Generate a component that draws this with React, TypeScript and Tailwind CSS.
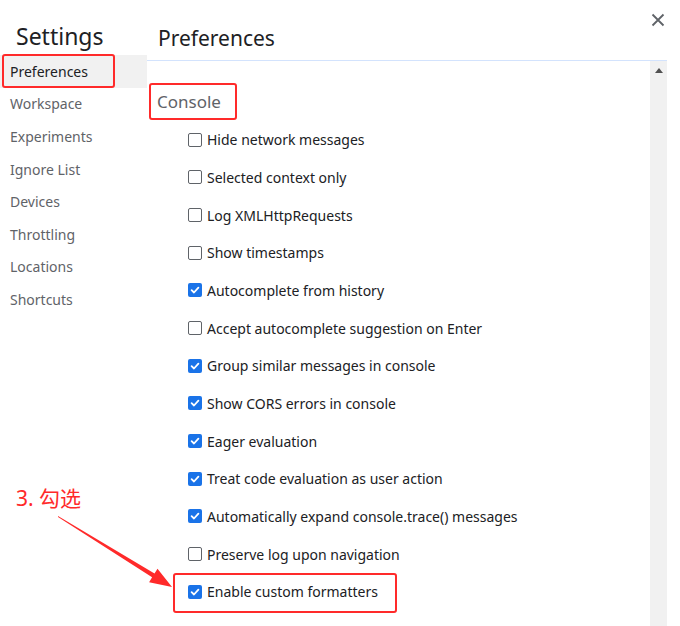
import React from "react";

const navItems = [
  "Preferences",
  "Workspace",
  "Experiments",
  "Ignore List",
  "Devices",
  "Throttling",
  "Locations",
  "Shortcuts",
];

const consoleOptions: { label: string; checked: boolean }[] = [
  { label: "Hide network messages", checked: false },
  { label: "Selected context only", checked: false },
  { label: "Log XMLHttpRequests", checked: false },
  { label: "Show timestamps", checked: false },
  { label: "Autocomplete from history", checked: true },
  { label: "Accept autocomplete suggestion on Enter", checked: false },
  { label: "Group similar messages in console", checked: true },
  { label: "Show CORS errors in console", checked: true },
  { label: "Eager evaluation", checked: true },
  { label: "Treat code evaluation as user action", checked: true },
  { label: "Automatically expand console.trace() messages", checked: true },
  { label: "Preserve log upon navigation", checked: false },
  { label: "Enable custom formatters", checked: true },
];

const Checkbox = ({ checked }: { checked: boolean }) =>
  checked ? (
    <span className="flex h-[14px] w-[14px] items-center justify-center rounded-[2px] bg-[#1a73e8]">
      <svg width="10" height="10" viewBox="0 0 10 10" fill="none">
        <path d="M1.6 5.2 L4 7.5 L8.4 2.6" stroke="white" strokeWidth="1.8" strokeLinecap="round" strokeLinejoin="round" />
      </svg>
    </span>
  ) : (
    <span className="h-[14px] w-[14px] rounded-[2px] border border-[#5f6368] bg-white" />
  );

export default function App() {
  return (
    <div
      className="relative flex h-[626px] w-[680px] overflow-hidden bg-white"
      style={{ fontFamily: '"Noto Sans", "Noto Sans CJK SC", sans-serif' }}
    >
      {/* sidebar */}
      <div className="w-[147px] shrink-0">
        <div className="h-[55px] pl-[16px] pt-[21px] text-[23px] leading-[30px] text-[#202124]">Settings</div>
        {navItems.map((item, i) => (
          <div
            key={item}
            className={
              "flex h-[32.6px] items-center pl-[10px] text-[14px] " +
              (i === 0 ? "bg-[#f1f1f1] text-[#202124]" : "text-[#5f6368]")
            }
          >
            {item}
          </div>
        ))}
      </div>

      {/* main */}
      <div className="flex flex-1 flex-col">
        <div className="mr-[13px] flex h-[61px] items-start justify-between border-b border-[#d3e3fd] pl-[11px]">
          <div className="pt-[23px] text-[21px] leading-[30px] text-[#202124]">Preferences</div>
          <button className="mr-[-1px] mt-[10px] flex h-[20px] w-[20px] items-center justify-center">
            <svg width="14" height="14" viewBox="0 0 14 14">
              <path d="M1.5 1.5 L12.5 12.5 M12.5 1.5 L1.5 12.5" stroke="#5f6368" strokeWidth="1.8" />
            </svg>
          </button>
        </div>
        <div className="flex flex-1">
          <div className="flex-1 pl-[10px]">
            <div className="flex h-[60px] items-center pt-[22px] text-[17px] text-[#5f6368]">Console</div>
            {consoleOptions.map((o) => (
              <div key={o.label} className="flex h-[37.67px] items-center gap-[5px] pl-[31px] text-[14px] text-[#202124]">
                <Checkbox checked={o.checked} />
                <span>{o.label}</span>
              </div>
            ))}
          </div>
          <div className="mr-[13px] flex w-[17px] shrink-0 justify-center bg-[#f1f1f1] pt-[7px]">
            <svg width="8" height="5" viewBox="0 0 8 5">
              <path d="M0 5 L4 0 L8 5 Z" fill="#505050" />
            </svg>
          </div>
        </div>
      </div>

      {/* annotations */}
      <div className="absolute left-[2px] top-[54px] h-[34px] w-[113px] rounded-[3px] border-[2.5px] border-[#ff2a2a]" />
      <div className="absolute left-[149px] top-[83px] h-[37px] w-[88px] rounded-[3px] border-[2.5px] border-[#ff2a2a]" />
      <div className="absolute left-[173px] top-[573px] h-[40px] w-[224px] rounded-[3px] border-[2.5px] border-[#ff2a2a]" />
      <div className="absolute left-[16px] top-[484px] text-[21px] leading-[28px] text-[#ff2a2a]">3. 勾选</div>
      <svg className="absolute left-0 top-0" width="680" height="626" viewBox="0 0 680 626">
        <polygon
          points="58,516 154.5,573.6 157.5,568.7 172,587 149.1,582.2 152.1,577.3 58,517"
          fill="#ff2a2a"
        />
      </svg>
    </div>
  );
}
